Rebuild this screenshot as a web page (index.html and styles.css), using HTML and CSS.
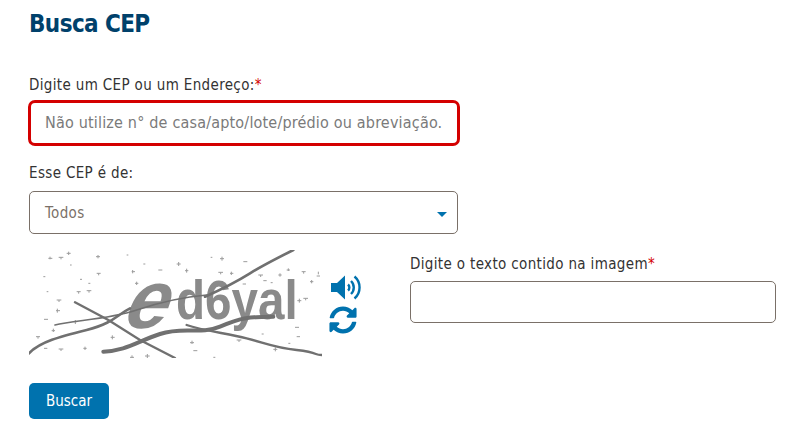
FILE: index.html
```html
<!DOCTYPE html>
<html lang="pt-BR">
<head>
  <meta charset="UTF-8">
  <title>Busca CEP</title>
  <link rel="stylesheet" href="styles.css">
</head>
<body>
  <div class="container">
    <h1 class="page-title">Busca CEP</h1>

    <div class="field field-cep">
      <label class="field-label">Digite um CEP ou um Endereço:<span class="required">*</span></label>
      <input type="text" class="text-input input-error" placeholder="Não utilize n° de casa/apto/lote/prédio ou abreviação.">
    </div>

    <div class="field field-tipo">
      <label class="field-label">Esse CEP é de:</label>
      <div class="select-box">
        <span>Todos</span>
        <span class="select-arrow"></span>
      </div>
    </div>

    <div class="captcha-row">
      <svg class="captcha-image" viewBox="27 30 879 324" width="293" height="108" xmlns="http://www.w3.org/2000/svg">
        <!-- noise -->
        <path class="noise" d="M85 55h12M90 50v8M116 52h14M123 52v6M140 40h12M146 35v10M228 50h12M234 45v10M70 110h6M180 118h6M205 130h6M170 155h12M176 155v6M200 152h14M207 152v6M80 155h5M110 180h14M117 180v6M108 212h12M112 206v12M72 238h12M48 290h12M54 290v6M72 325h10M116 327h14M123 327v6M190 325h10M195 320v10M272 292h12M277 286v12M275 330h6M335 95h10M338 90v10M345 130h10M350 125v10M415 90h12M470 72h12M476 66v12M495 92h10M500 86v12M370 72h6M320 45h5M572 52h5M600 56h12M606 50v12M670 65h12M595 97h14M602 97v6M630 100h10M634 95v10M668 132h10M715 105h14M722 105v6M730 122h10M752 128h6M775 105h10M780 100v10M800 90h10M805 85v8M845 95h12M851 95v6M870 125h10M875 120v10M890 108h10M895 95v8M832 182h12M838 176v12M850 175h14M857 175v6M825 262h12M830 290h10M805 310h6M760 328h12M766 322v12M650 300h14M657 300v6M510 308h12M516 302v10M520 332h12M725 282h6M330 352h12M336 346v8M375 348h14M382 342v12M580 352h6M160 245h12M166 240v12M95 272h10M100 266v10M150 75h5M230 100h12M236 100v6"/>
        <!-- distorted text -->
        <text class="captcha-e" x="0" y="0" transform="translate(298 264) skewX(-22) scale(1.12 1.18)">e</text>
        <text class="captcha-text" x="468" y="238" textLength="365" lengthAdjust="spacingAndGlyphs">d6yal</text>
        <!-- lines -->
        <path class="line" stroke-width="8" d="M555 170C600 150 650 125 690 100S760 60 820 30"/>
        <path class="line" stroke-width="5" d="M105 255C160 240 260 240 350 210S500 170 560 165"/>
        <path class="line" stroke-width="7" d="M165 187L265 240L360 300L465 354"/>
        <path class="line" stroke-width="8" d="M27 340C60 305 120 290 200 270S290 225 330 205"/>
        <path class="line" stroke-width="12" d="M250 335C320 332 350 305 420 282S540 285 600 260S680 230 760 230"/>
        <path class="line" stroke-width="7" d="M500 255C550 272 620 280 680 295S760 322 830 330S880 345 905 345"/>
      </svg>

      <div class="captcha-actions">
        <svg class="icon-audio" viewBox="0 0 30 25" width="30" height="25" xmlns="http://www.w3.org/2000/svg">
          <path class="icon-fill" d="M0 8H6L14 0.500V24.500L6 17H0Z"/>
          <path class="icon-arc" d="M17 9.500A4 4 0 0 1 17 15.500"/>
          <path class="icon-arc" d="M20 6A9 9 0 0 1 20 19"/>
          <path class="icon-arc" d="M23.500 1.500A14.500 14.500 0 0 1 23.500 23.500"/>
        </svg>
        <svg class="icon-refresh" viewBox="0 0 512 512" width="28" height="28" xmlns="http://www.w3.org/2000/svg">
          <path class="icon-fill" d="M370.72 133.28C339.458 104.008 298.888 87.962 255.848 88c-77.458.068-144.328 53.178-162.791 126.85-1.344 5.363-6.122 9.15-11.651 9.15H24.103c-7.498 0-13.194-6.807-11.807-14.176C33.933 94.924 134.813 8 256 8c66.448 0 126.791 26.136 171.315 68.685L463.03 40.97C478.149 25.851 504 36.559 504 57.941V192c0 13.255-10.745 24-24 24H345.941c-21.382 0-32.09-25.851-16.971-40.971l41.75-41.749zM32 296h134.059c21.382 0 32.09 25.851 16.971 40.971l-41.75 41.75c31.262 29.273 71.835 45.319 114.876 45.28 77.418-.07 144.315-53.144 162.787-126.849 1.344-5.363 6.122-9.15 11.651-9.15h57.304c7.498 0 13.194 6.807 11.807 14.176C478.067 417.076 377.187 504 256 504c-66.448 0-126.791-26.136-171.315-68.685L48.97 471.03C33.851 486.149 8 475.441 8 454.059V320c0-13.255 10.745-24 24-24z"/>
        </svg>
      </div>

      <div class="field field-captcha">
        <label class="field-label">Digite o texto contido na imagem<span class="required">*</span></label>
        <input type="text" class="text-input">
      </div>
    </div>

    <button class="btn-primary">Buscar</button>
  </div>
</body>
</html>
```

FILE: styles.css
```css
body {
  font-family: "DejaVu Sans Condensed", "DejaVu Sans", sans-serif;
  margin: 0;
  padding: 0;
  background-color: white;
  color: #333;
  font-size: 15px;
}

.container {
  padding: 8px 20px 0 29px;
}

.page-title {
  margin: 0;
  font-size: 24px;
  line-height: 32px;
  font-weight: 700;
  letter-spacing: -0.6px;
  color: #00416b;
}

.field-label {
  display: block;
  line-height: 20px;
  letter-spacing: 0.35px;
  color: #333;
}

.required {
  color: #d40000;
}

.field-cep {
  margin-top: 35px;
  width: 429px;
}

.field-tipo {
  margin-top: 17px;
  width: 429px;
}

.text-input {
  display: block;
  width: 100%;
  height: 42px;
  box-sizing: border-box;
  border: 1px solid #7a7068;
  border-radius: 5px;
  padding: 0 15px;
  font-family: inherit;
  font-size: 15px;
  background-color: white;
}

.text-input::placeholder {
  color: #7a7a7a;
  opacity: 1;
  font-size: 16px;
  letter-spacing: 0.18px;
}

.input-error {
  width: 432px;
  height: 46px;
  margin: 5px 0 0 -1px;
  padding: 0 14px;
  border: 3px solid #d40000;
  border-radius: 7px;
}

.select-box {
  display: flex;
  justify-content: space-between;
  align-items: center;
  height: 43px;
  box-sizing: border-box;
  margin-top: 8px;
  padding: 0 10px 0 15px;
  border: 1px solid #7a7068;
  border-radius: 5px;
  letter-spacing: 0.35px;
  color: #7a7068;
}

.select-arrow {
  width: 0;
  height: 0;
  margin-top: 3px;
  border-left: 5px solid transparent;
  border-right: 5px solid transparent;
  border-top: 5px solid #0072ae;
}

.captcha-row {
  display: flex;
  margin-top: 16px;
  height: 108px;
}

.captcha-image {
  display: block;
  flex-shrink: 0;
  filter: blur(0.4px);
}

.noise {
  fill: none;
  stroke: #9c9c9c;
  stroke-width: 3;
}

.line {
  fill: none;
  stroke: #707070;
  stroke-linecap: round;
}

.captcha-e {
  font-family: "Liberation Sans", sans-serif;
  font-size: 210px;
  font-weight: 700;
  fill: #8a8a8a;
}

.captcha-text {
  font-family: "Liberation Sans", sans-serif;
  font-size: 165px;
  font-weight: 700;
  fill: #8a8a8a;
}

.captcha-actions {
  display: flex;
  flex-direction: column;
  align-items: flex-start;
  gap: 6px;
  width: 88px;
  padding: 25px 0 0 7px;
  box-sizing: border-box;
}

.icon-audio {
  margin-left: 2px;
}

.icon-fill {
  fill: #0072ae;
}

.icon-arc {
  fill: none;
  stroke: #0072ae;
  stroke-width: 2.4;
}

.field-captcha {
  width: 366px;
  padding-top: 4px;
}

.field-captcha .text-input {
  margin-top: 7px;
}

.btn-primary {
  display: block;
  margin-top: 25px;
  width: 80px;
  height: 36px;
  background-color: #0072ae;
  color: white;
  border: none;
  border-radius: 5px;
  font-family: inherit;
  font-size: 15px;
  font-weight: 500;
  cursor: pointer;
}
```
